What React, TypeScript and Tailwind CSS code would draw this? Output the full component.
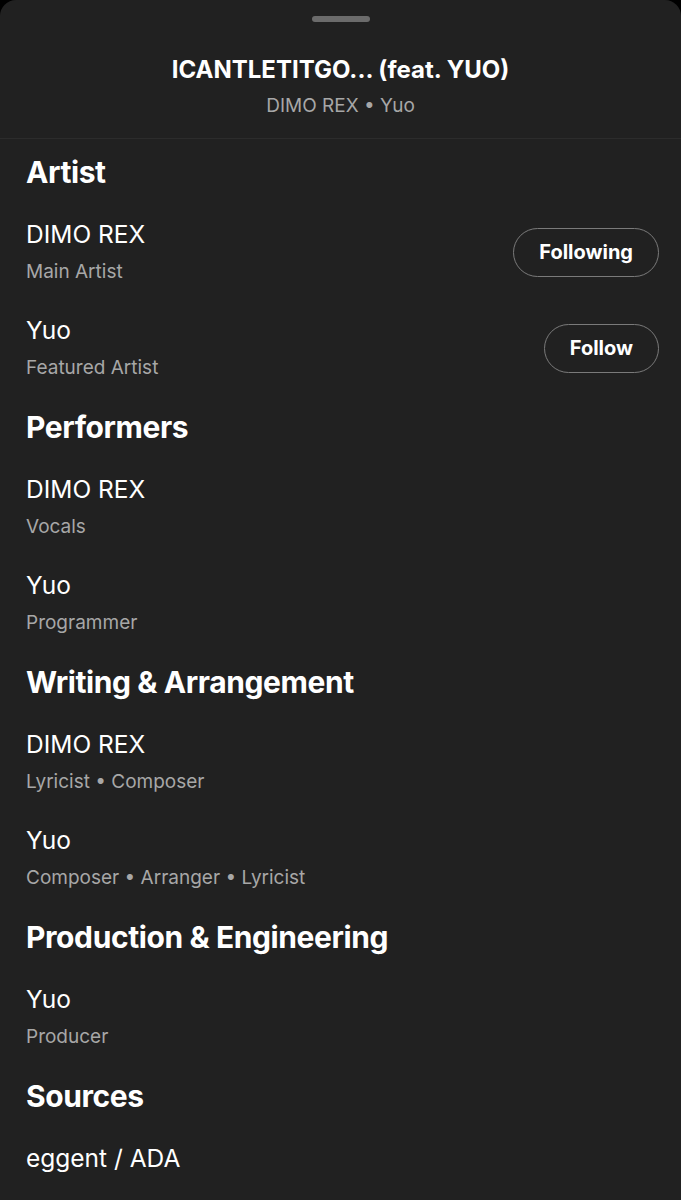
import React from 'react';

interface Credit {
  name: string;
  role: string;
  follow?: 'Following' | 'Follow';
}

interface Section {
  title: string;
  credits: Credit[];
}

const SECTIONS: Section[] = [
  {
    title: 'Artist',
    credits: [
      { name: 'DIMO REX', role: 'Main Artist', follow: 'Following' },
      { name: 'Yuo', role: 'Featured Artist', follow: 'Follow' },
    ],
  },
  {
    title: 'Performers',
    credits: [
      { name: 'DIMO REX', role: 'Vocals' },
      { name: 'Yuo', role: 'Programmer' },
    ],
  },
  {
    title: 'Writing & Arrangement',
    credits: [
      { name: 'DIMO REX', role: 'Lyricist • Composer' },
      { name: 'Yuo', role: 'Composer • Arranger • Lyricist' },
    ],
  },
  {
    title: 'Production & Engineering',
    credits: [{ name: 'Yuo', role: 'Producer' }],
  },
];

const CreditRow: React.FC<{ credit: Credit }> = ({ credit }) => (
  <div className="flex items-center justify-between">
    <div className="flex flex-col gap-[12px]">
      <span className="text-[24.5px] leading-[28px] text-white">{credit.name}</span>
      <span className="text-[19px] leading-[24px] text-[#a7a7a7]">{credit.role}</span>
    </div>
    {credit.follow && (
      <button className="h-[49px] rounded-full border-[1.5px] border-[#7a7a7a] px-[25px] text-[20px] font-bold text-white">
        {credit.follow}
      </button>
    )}
  </div>
);

export default function App() {
  return (
    <div
      className="min-h-[1200px] bg-black"
      style={{ fontFamily: 'Inter, "Noto Sans", sans-serif' }}
    >
      <div className="min-h-[1200px] rounded-t-[16px] bg-[#212121]">
        {/* header */}
        <div className="flex flex-col items-center border-b border-[#2c2c2c] pt-[16px] pb-[20px]">
          <div className="h-[6px] w-[58px] rounded-full bg-[#6b6b6b]" />
          <h1 className="mt-[34px] text-[24px] font-bold leading-[28px] text-white">
            ICANTLETITGO... (feat. YUO)
          </h1>
          <p className="mt-[10px] text-[19px] leading-[24px] text-[#a7a7a7]">DIMO REX • Yuo</p>
        </div>

        {/* credits */}
        <div className="flex flex-col gap-[29px] pl-[26px] pr-[22px] pt-[15px]">
          {SECTIONS.map((section) => (
            <section key={section.title} className="flex flex-col gap-[30px]">
              <h2 className="text-[30px] font-bold leading-[36px] tracking-[-0.4px] text-white">
                {section.title}
              </h2>
              <div className="flex flex-col gap-[32px]">
                {section.credits.map((c, i) => (
                  <CreditRow key={i} credit={c} />
                ))}
              </div>
            </section>
          ))}
          <section className="flex flex-col gap-[30px]">
            <h2 className="text-[30px] font-bold leading-[36px] tracking-[-0.4px] text-white">Sources</h2>
            <span className="text-[24.5px] leading-[28px] text-white">eggent / ADA</span>
          </section>
        </div>
      </div>
    </div>
  );
}
